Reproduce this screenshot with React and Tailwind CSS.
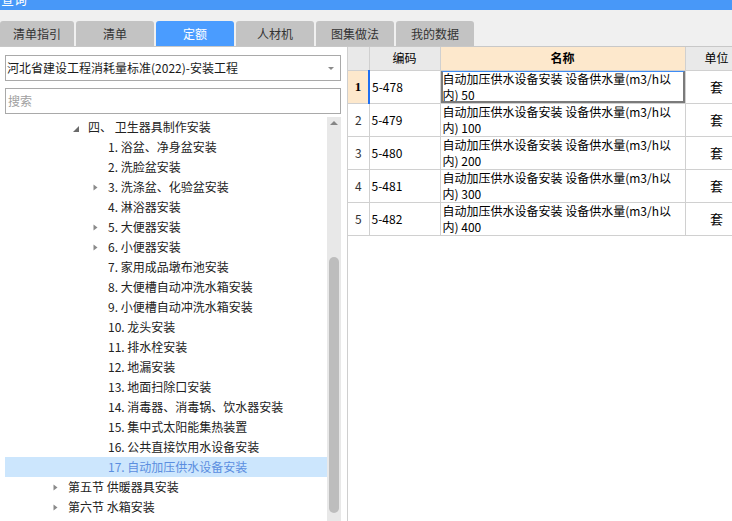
import React from "react";

const tabs = [
	{ label: "清单指引", w: "w-[74px]" },
	{ label: "清单", w: "w-[78px]" },
	{ label: "定额", w: "w-[78px]", active: true },
	{ label: "人材机", w: "w-[78px]" },
	{ label: "图集做法", w: "w-[78px]" },
	{ label: "我的数据", w: "w-[78px]" },
];

const tree = [
	{ t: "四、 卫生器具制作安装", lv: 1, tri: "open" },
	{ t: "1. 浴盆、净身盆安装", lv: 2 },
	{ t: "2. 洗脸盆安装", lv: 2 },
	{ t: "3. 洗涤盆、化验盆安装", lv: 2, tri: "closed" },
	{ t: "4. 淋浴器安装", lv: 2 },
	{ t: "5. 大便器安装", lv: 2, tri: "closed" },
	{ t: "6. 小便器安装", lv: 2, tri: "closed" },
	{ t: "7. 家用成品墩布池安装", lv: 2 },
	{ t: "8. 大便槽自动冲洗水箱安装", lv: 2 },
	{ t: "9. 小便槽自动冲洗水箱安装", lv: 2 },
	{ t: "10. 龙头安装", lv: 2 },
	{ t: "11. 排水栓安装", lv: 2 },
	{ t: "12. 地漏安装", lv: 2 },
	{ t: "13. 地面扫除口安装", lv: 2 },
	{ t: "14. 消毒器、消毒锅、饮水器安装", lv: 2 },
	{ t: "15. 集中式太阳能集热装置", lv: 2 },
	{ t: "16. 公共直接饮用水设备安装", lv: 2 },
	{ t: "17. 自动加压供水设备安装", lv: 2, selected: true },
	{ t: "第五节 供暖器具安装", lv: 0, tri: "closed" },
	{ t: "第六节 水箱安装", lv: 0, tri: "closed" },
];

const indent = { 0: "pl-[48px]", 1: "pl-[68px]", 2: "pl-[88px]" };

const rows = [
	{ n: 1, code: "5-478", q: "50" },
	{ n: 2, code: "5-479", q: "100" },
	{ n: 3, code: "5-480", q: "200" },
	{ n: 4, code: "5-481", q: "300" },
	{ n: 5, code: "5-482", q: "400" },
];

const Triangle = ({ kind }) => {
	if (kind === "open")
		return (
			<svg width="6" height="6" viewBox="0 0 6 6" className="mt-[3px]">
				<path d="M6 0 L6 6 L0 6 Z" fill="#6a6a6a" />
			</svg>
		);
	if (kind === "closed")
		return (
			<svg width="5" height="7" viewBox="0 0 5 7" className="mt-[1px]">
				<path d="M0.5 0.5 L4.5 3.5 L0.5 6.5 Z" fill="#8a8a8a" />
			</svg>
		);
	return null;
};

export default function App() {
	return (
		<div className="w-[732px] h-[521px] overflow-hidden bg-white text-[12px] text-[#222] font-['Noto_Sans_CJK_SC','Noto_Sans',sans-serif]">
			{/* title bar */}
			<div className="h-[10px] bg-[#4898f8] overflow-hidden">
				<span className="block text-white text-[13px] leading-[14px] -mt-[8px] ml-[1px]">
					查询
				</span>
			</div>
			<div className="h-[11px] bg-[#f0f0f0]" />

			{/* tabs */}
			<div className="flex items-end gap-[2px] h-[26px] bg-[#f0f0f0] border-b border-[#c8c8c8]">
				{tabs.map((tab) => (
					<div
						key={tab.label}
						className={
							"h-[25px] flex items-center justify-center rounded-t-[3px] " +
							tab.w +
							(tab.active ? " bg-[#4a9cff] text-white" : " bg-[#c3c3c3] text-[#333]")
						}
					>
						{tab.label}
					</div>
				))}
			</div>

			<div className="flex h-[474px]">
				{/* left panel */}
				<div className="w-[348px] shrink-0 border-r border-[#cfcfcf] pl-[5px] pr-[6px] flex flex-col">
					<div className="mt-[8px] h-[26px] border border-[#a9a9a9] flex items-center pl-[1px] pr-[6px]">
						<span className="flex-1 whitespace-nowrap text-[12px] text-[#1a1a1a]">
							河北省建设工程消耗量标准(2022)-安装工程
						</span>
						<svg width="6" height="3" viewBox="0 0 6 3">
							<path d="M0 0 L6 0 L3 3 Z" fill="#8a8a8a" />
						</svg>
					</div>
					<div className="mt-[7px] h-[26px] border border-[#a9a9a9] flex items-center pl-[2px] text-[#a0a0a0]">
						搜索
					</div>

					<div className="mt-[3px] flex flex-1 min-h-0">
						<div className="flex-1 overflow-hidden">
							{tree.map((item) => (
								<div
									key={item.t}
									className={
										"flex items-center h-[20px] whitespace-nowrap " +
										indent[item.lv] +
										(item.selected ? " bg-[#cce6fd] text-[#5b8ee0]" : "")
									}
								>
									<div className="w-[15px] flex items-center">
										<Triangle kind={item.tri} />
									</div>
									<span>{item.t}</span>
								</div>
							))}
						</div>
						{/* scrollbar */}
						<div className="w-[14px] bg-[#e8e8e8] flex flex-col items-center">
							<svg width="8" height="4" viewBox="0 0 8 4" className="mt-[4px]">
								<path d="M0 4 L4 0 L8 4 Z" fill="#858585" />
							</svg>
							<div className="mt-[132px] w-[10px] h-[256px] rounded-full bg-[#bdbdbd]" />
						</div>
					</div>
				</div>

				{/* right panel */}
				<div className="flex-1 overflow-hidden">
					<table className="table-fixed border-collapse w-[400px] text-[12px] text-black">
						<colgroup>
							<col className="w-[21px]" />
							<col className="w-[71px]" />
							<col className="w-[245px]" />
							<col className="w-[63px]" />
						</colgroup>
						<thead>
							<tr className="h-[23px]">
								<th className="border border-l-0 border-t-0 border-[#d0d0d0] bg-[#e9e9e9]" />
								<th className="border border-t-0 border-[#d0d0d0] bg-[#e9e9e9] font-normal">
									编码
								</th>
								<th className="border border-t-0 border-[#d0d0d0] bg-[#fde8cc] font-bold">
									名称
								</th>
								<th className="border border-t-0 border-[#d0d0d0] bg-[#e9e9e9] font-normal">
									单位
								</th>
							</tr>
						</thead>
						<tbody>
							{rows.map((r) => (
								<tr key={r.n} className="h-[33px]">
									<td
										className={
											"border border-l-0 border-[#d0d0d0] text-center " +
											(r.n === 1
												? "bg-[#fde8cc] font-bold font-['Liberation_Serif',serif] text-[13px]"
												: "text-[#333]")
										}
									>
										{r.n}
									</td>
									<td
										className={
											"border border-[#d0d0d0] pl-[2px] " +
											(r.n === 1 ? "border-l-2 border-l-[#1f6ff2]" : "")
										}
									>
										{r.code}
									</td>
									<td className="relative border border-[#d0d0d0] align-top pl-[2px] leading-[16px]">
										<div>自动加压供水设备安装 设备供水量(m3/h以</div>
										<div>内) {r.q}</div>
										{r.n === 1 && (
											<div className="absolute inset-0 border-2 border-t border-[#7b7b7b] border-t-[#3d8bf5]" />
										)}
									</td>
									<td className="border border-[#d0d0d0] text-center text-[13px]">套</td>
								</tr>
							))}
						</tbody>
					</table>
				</div>
			</div>
		</div>
	);
}
